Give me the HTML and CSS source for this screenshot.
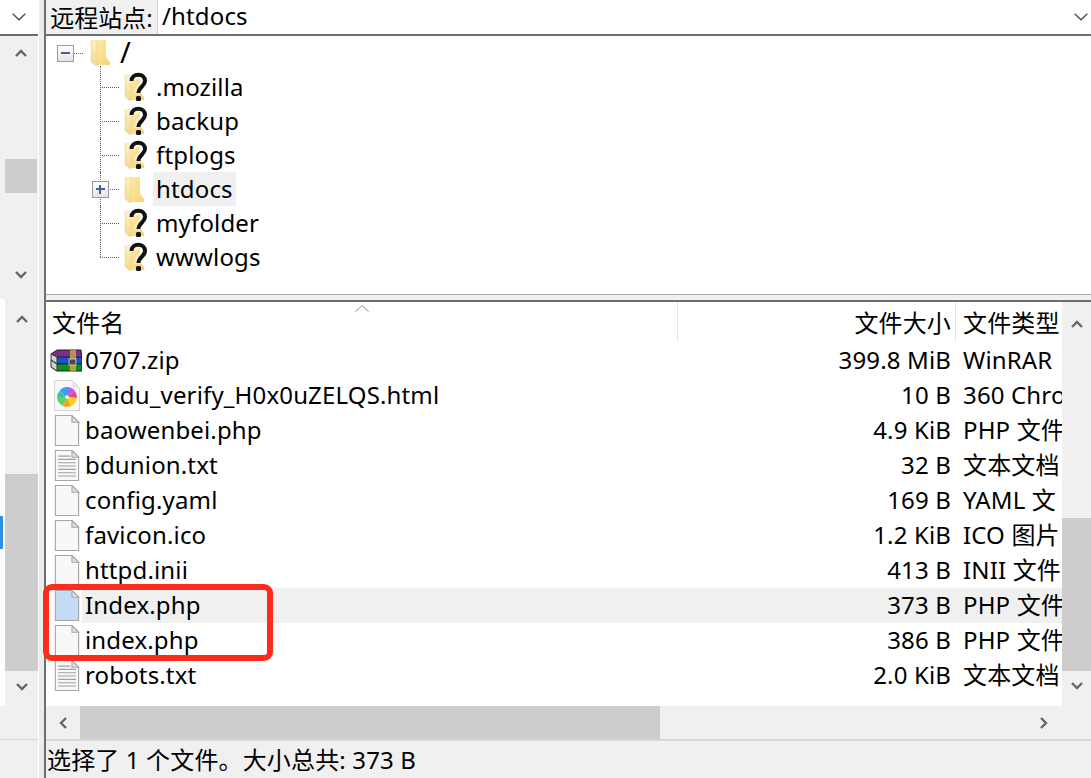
FILE: index.html
```html
<!DOCTYPE html>
<html lang="zh-CN">
<head>
<meta charset="utf-8">
<title>FileZilla</title>
<link rel="stylesheet" href="styles.css">
</head>
<body>
<svg class="defs" width="0" height="0" aria-hidden="true">
  <defs>
    <linearGradient id="fold" x1="0" y1="0" x2="1" y2="1">
      <stop offset="0" stop-color="#fdeaa8"/><stop offset="1" stop-color="#f6d36f"/>
    </linearGradient>
    <linearGradient id="foldb" x1="0" y1="0" x2="0" y2="1">
      <stop offset="0" stop-color="#fff0bd"/><stop offset="1" stop-color="#f3d98f"/>
    </linearGradient>
    <filter id="glow" x="-30%" y="-30%" width="160%" height="160%"><feGaussianBlur stdDeviation="0.9"/></filter>
    <symbol id="folder" viewBox="0 0 20 28">
      <path d="M6 1h10v17l4 5v3H6z" fill="url(#fold)"/>
      <path d="M1 2l6-1v26l-3-1.500-3-3z" fill="url(#foldb)" stroke="#e8cf8c" stroke-width=".5"/>
    </symbol>
    <symbol id="unknown" viewBox="0 0 24 30">
      <use href="#folder" x="0" y="2" width="20" height="28"/>
      <path d="M7.500 9c0-8.500 13.500-8.500 13.500 0 0 5.500-6.500 5.500-6.500 12" fill="none" stroke="#fff" stroke-width="6.500" filter="url(#glow)"/>
      <path d="M7.500 9c0-8.500 13.500-8.500 13.500 0 0 5.500-6.500 5.500-6.500 12" fill="none" stroke="#111" stroke-width="4"/>
      <rect x="12" y="24" width="5" height="5" rx="1.500" fill="#111"/>
    </symbol>
    <symbol id="doc" viewBox="0 0 22 28">
      <path d="M.5.500h15l6 6v21H.5z" fill="#f8f8f8" stroke="#a6a6a6"/>
      <path d="M15.500.500v6h6z" fill="#dfe3e8" stroke="#a6a6a6"/>
    </symbol>
    <symbol id="docsel" viewBox="0 0 22 28">
      <path d="M.5.500h15l6 6v21H.5z" fill="#c5dcf6" stroke="#a6a6a6"/>
      <path d="M15.500.500v6h6z" fill="#dfe6ef" stroke="#a6a6a6"/>
    </symbol>
    <symbol id="txt" viewBox="0 0 22 28">
      <path d="M.5.500h15l6 6v21H.5z" fill="#f8f8f8" stroke="#a6a6a6"/>
      <path d="M15.500.500v6h6z" fill="#dfe3e8" stroke="#a6a6a6"/>
      <path d="M3 5.500h11M3 8.500h16M3 11.500h16M3 14.500h16M3 17.500h16M3 20.500h16M3 23.500h16" stroke="#a0a0a0"/>
    </symbol>
    <symbol id="rar" viewBox="0 0 32 24">
      <path d="M1 5l6-4h24l1 8H7z" fill="#7c2f86" stroke="#2b1530"/>
      <path d="M1 11l6-3h25v7H7z" fill="#1f4fc4" stroke="#13204d"/>
      <path d="M1 18l6-3h25v7H7z" fill="#0d8f22" stroke="#0b3312"/>
      <path d="M1 5l6 3v7l-6-4zM1 11l6 4v7l-6-4z" fill="#cfd3d6" stroke="#333"/>
      <path d="M20 1h6v21h-6z" fill="#c9a24a" fill-opacity=".85"/>
      <rect x="19" y="10" width="7" height="6" fill="#5a4a2a" stroke="#eee" stroke-width=".7"/>
    </symbol>
    <symbol id="browser" viewBox="0 0 26 31">
      <path d="M.5.500h18l7 7v23H.5z" fill="#f7f7f7" stroke="#d4d4d4"/>
      <path d="M18.500.500v7h7z" fill="#e4e4e4"/>
      <path d="M13 17L5.500 11A10 10 0 0 1 13 7z" fill="#3aa0f0"/>
      <path d="M13 17V7a10 10 0 0 1 8 4z" fill="#b05ff0"/>
      <path d="M13 17l8-6a10 10 0 0 1 2 7z" fill="#f0418c"/>
      <path d="M13 17l10 1a10 10 0 0 1-6 8z" fill="#f9d423"/>
      <path d="M13 17l4 9a10 10 0 0 1-8 0z" fill="#f9a01e"/>
      <path d="M13 17l-4 9a10 10 0 0 1-6-9z" fill="#5fd35f"/>
      <path d="M13 17H3a10 10 0 0 1 2.500-6z" fill="#35c3a8"/>
      <circle cx="13" cy="17" r="1.800" fill="#fff"/>
    </symbol>
    <symbol id="up" viewBox="0 0 12 8"><path d="M1 7l5-5 5 5" fill="none" stroke="#666" stroke-width="2.400"/></symbol>
    <symbol id="down" viewBox="0 0 12 8"><path d="M1 1l5 5 5-5" fill="none" stroke="#666" stroke-width="2.400"/></symbol>
    <symbol id="left" viewBox="0 0 8 12"><path d="M7 1L2 6l5 5" fill="none" stroke="#666" stroke-width="2.400"/></symbol>
    <symbol id="right" viewBox="0 0 8 12"><path d="M1 1l5 5-5 5" fill="none" stroke="#666" stroke-width="2.400"/></symbol>
    <symbol id="combo" viewBox="0 0 14 8"><path d="M.7.700L7 6.800 13.300.700" fill="none" stroke="#444" stroke-width="1.200"/></symbol>
  </defs>
</svg>

<div class="app">
  <div class="corner"><svg class="combo-arrow"><use href="#combo"/></svg></div>
  <div class="split split-top"></div>
  <div class="pathbar">
    <span class="path-label">远程站点:</span>
    <span class="path-value">/htdocs</span>
    <svg class="combo-arrow"><use href="#combo"/></svg>
  </div>

  <div class="vscroll side-upper">
    <svg class="arrow"><use href="#up"/></svg>
    <div class="track"><div class="thumb thumb-a"></div></div>
    <svg class="arrow"><use href="#down"/></svg>
  </div>
  <div class="split"></div>
  <div class="tree">
    <div class="tree-root">
      <span class="exp"><span class="exp-h"></span></span>
      <span class="dots-root"></span>
      <svg class="ico-root"><use href="#folder"/></svg>
      <span class="root-label">/</span>
    </div>
    <div class="tree-child"><span class="conn"></span><svg class="ico-node"><use href="#unknown"/></svg><span class="node-label">.mozilla</span></div>
    <div class="tree-child"><span class="conn"></span><svg class="ico-node"><use href="#unknown"/></svg><span class="node-label">backup</span></div>
    <div class="tree-child"><span class="conn"></span><svg class="ico-node"><use href="#unknown"/></svg><span class="node-label">ftplogs</span></div>
    <div class="tree-child"><span class="exp exp-over"><span class="exp-h"></span><span class="exp-v"></span></span><span class="conn"></span><svg class="ico-node"><use href="#folder" width="20" height="28" y="2"/></svg><span class="node-label is-current">htdocs</span></div>
    <div class="tree-child"><span class="conn"></span><svg class="ico-node"><use href="#unknown"/></svg><span class="node-label">myfolder</span></div>
    <div class="tree-child"><span class="conn"></span><svg class="ico-node"><use href="#unknown"/></svg><span class="node-label">wwwlogs</span></div>
  </div>

  <div class="gap-left"></div>
  <div class="split"></div>
  <div class="gap-main"></div>

  <div class="side-lower">
    <div class="sliver"><span class="sliver-mark"></span></div>
    <div class="vscroll">
      <svg class="arrow"><use href="#up"/></svg>
      <div class="track"><div class="thumb thumb-b"></div></div>
      <svg class="arrow"><use href="#down"/></svg>
    </div>
  </div>
  <div class="split"></div>
  <div class="list-wrap">
    <div class="list">
      <div class="row head">
        <div class="name-head">文件名<svg class="sort" viewBox="0 0 14 7"><path d="M.5 6.500L7 .7l6.500 5.800" fill="none" stroke="#8a8a8a"/></svg></div>
        <div class="size">文件大小</div>
        <div class="type">文件类型</div>
      </div>
      <div class="row"><div class="name"><svg class="ico-rar"><use href="#rar"/></svg><span class="fname">0707.zip</span></div><div class="size">399.8 MiB</div><div class="type">WinRAR</div></div>
      <div class="row"><div class="name"><svg class="ico-file"><use href="#browser"/></svg><span class="fname">baidu_verify_H0x0uZELQS.html</span></div><div class="size">10 B</div><div class="type">360 Chrome</div></div>
      <div class="row"><div class="name"><svg class="ico-file"><use href="#doc"/></svg><span class="fname">baowenbei.php</span></div><div class="size">4.9 KiB</div><div class="type">PHP 文件</div></div>
      <div class="row"><div class="name"><svg class="ico-file"><use href="#txt"/></svg><span class="fname">bdunion.txt</span></div><div class="size">32 B</div><div class="type">文本文档</div></div>
      <div class="row"><div class="name"><svg class="ico-file"><use href="#doc"/></svg><span class="fname">config.yaml</span></div><div class="size">169 B</div><div class="type">YAML 文</div></div>
      <div class="row"><div class="name"><svg class="ico-file"><use href="#doc"/></svg><span class="fname">favicon.ico</span></div><div class="size">1.2 KiB</div><div class="type">ICO 图片</div></div>
      <div class="row"><div class="name"><svg class="ico-file"><use href="#doc"/></svg><span class="fname">httpd.inii</span></div><div class="size">413 B</div><div class="type">INII 文件</div></div>
      <div class="row selected"><div class="name"><svg class="ico-file"><use href="#docsel"/></svg><span class="fname">Index.php</span></div><div class="size">373 B</div><div class="type">PHP 文件</div></div>
      <div class="row"><div class="name"><svg class="ico-file"><use href="#doc"/></svg><span class="fname">index.php</span></div><div class="size">386 B</div><div class="type">PHP 文件</div></div>
      <div class="row"><div class="name"><svg class="ico-file"><use href="#txt"/></svg><span class="fname">robots.txt</span></div><div class="size">2.0 KiB</div><div class="type">文本文档</div></div>
    </div>
    <div class="vscroll list-scroll">
      <svg class="arrow"><use href="#up"/></svg>
      <div class="track"><div class="thumb thumb-c"></div></div>
      <svg class="arrow"><use href="#down"/></svg>
    </div>
    <div class="callout"></div>
  </div>

  <div class="bottom-left"></div>
  <div class="split"></div>
  <div class="hscroll">
    <svg class="harrow"><use href="#left"/></svg>
    <div class="htrack"><div class="hthumb"></div></div>
    <svg class="harrow"><use href="#right"/></svg>
  </div>

  <div class="bottom-left status-left"></div>
  <div class="split"></div>
  <div class="status">选择了 1 个文件。大小总共: 373 B</div>
</div>
</body>
</html>
```
FILE: styles.css
```css
* { box-sizing: border-box; }
html, body { margin: 0; height: 100%; }
body {
  background: #f0f0f0;
  color: #000;
  font-family: "Noto Sans", "Noto Sans CJK SC", sans-serif;
  font-size: 24px;
  letter-spacing: .15px;
  overflow: hidden;
}
.defs { position: absolute; }
svg { display: block; flex: none; }

.app {
  display: grid;
  grid-template-columns: 38px 8px 1fr;
  grid-template-rows: 36px 259px 7px 404px 33px 39px;
  width: 1091px;
  height: 778px;
}

.corner {
  background: #fff;
  border-bottom: 2px solid #6e6e6e;
  display: flex;
  align-items: center;
  justify-content: center;
}
.combo-arrow { width: 14px; height: 8px; }

.split {
  border-left: 1px solid #fff;
  border-right: 2px solid #6e6e6e;
  background: #ececec;
}

.pathbar {
  display: flex;
  align-items: center;
  background: #fff;
  border-bottom: 2px solid #6e6e6e;
  padding-right: 3px;
}
.path-label {
  background: #f0f0f0;
  align-self: stretch;
  width: 112px;
  display: flex;
  align-items: center;
  justify-content: center;
  border-right: 1px solid #d0d0d0;
  white-space: nowrap;
  padding-bottom: 2px;
  letter-spacing: 0;
}
.path-value { flex: 1; padding: 0 0 2px 4px; line-height: 1; }

.vscroll {
  display: flex;
  flex-direction: column;
  align-items: center;
  background: #f0f0f0;
}
.side-upper { margin-left: 5px; width: 32px; padding: 9px 0 12px; }
.arrow { width: 12px; height: 8px; margin: 4px 0; }
.track { flex: 1; align-self: stretch; }
.thumb { background: #cdcdcd; }
.thumb-a { margin-top: 98px; height: 34px; }

.tree { background: #fff; border-bottom: 1px solid #a8a8a8; }
.tree-root, .tree-child { display: flex; align-items: center; height: 34px; }
.tree-root { padding-left: 11px; }
.exp {
  width: 17px;
  height: 17px;
  border: 1px solid #9a9a9a;
  background: linear-gradient(#fff, #e4e4e4);
  position: relative;
  flex: none;
}
.exp-h { position: absolute; left: 3px; right: 3px; top: 6px; height: 2px; background: #3f5fa8; }
.exp-v { position: absolute; top: 3px; bottom: 3px; left: 6px; width: 2px; background: #3f5fa8; }
.dots-root { width: 9px; border-top: 1px dotted #666; }
.ico-root { width: 20px; height: 28px; margin-left: 7px; }
.root-label { margin-left: 10px; font-size: 29px; line-height: 34px; padding-bottom: 2px; }

.tree-child { margin-left: 54px; position: relative; }
.tree-child::before {
  content: "";
  position: absolute;
  left: 0;
  top: 0;
  bottom: 0;
  border-left: 1px dotted #666;
}
.tree-child:last-child::before { bottom: 50%; }
.tree-root + .tree-child::before { top: -4px; }
.conn { width: 19px; border-top: 1px dotted #666; flex: none; }
.ico-node { width: 24px; height: 30px; margin-left: 5px; }
.node-label { margin-left: 5px; padding: 0 3px; height: 34px; line-height: 33px; }
.is-current { background: #f0f0f0; }
.exp-over { position: absolute; left: -8px; top: 9px; z-index: 1; }

.gap-left { background: #f0f0f0; }
.gap-main { background: #f0f0f0; border-bottom: 2px solid #6e6e6e; }

.side-lower { display: flex; margin-top: -3px; height: 407px; background: #fff; position: relative; z-index: 1; }
.sliver { width: 5px; position: relative; }
.sliver-mark { position: absolute; left: 0; top: 217px; width: 3px; height: 33px; background: #2f8fe8; }
.side-lower .vscroll { flex: 1; padding: 12px 0 11px; }
.thumb-b { margin-top: 147px; height: 197px; }

.list-wrap { position: relative; display: flex; min-width: 0; background: #fff; }
.list { flex: 1; min-width: 0; overflow: hidden; }
.row {
  display: grid;
  grid-template-columns: 631px 279px 106px;
  height: 35px;
  line-height: 34px;
  white-space: nowrap;
}
.head { height: 40px; line-height: 42px; margin-bottom: 1px; }
.head > div { height: 40px; }
.name-head { padding-left: 6px; position: relative; }
.sort { position: absolute; left: 309px; top: 3px; width: 14px; height: 7px; }
.head .size { border-left: 1px solid #e4e4e4; border-right: 1px solid #e4e4e4; padding-right: 4px; }
.name { display: flex; align-items: center; }
.fname { flex: 1; padding-left: 3px; height: 35px; }
.ico-rar { width: 32px; height: 24px; margin-left: 4px; }
.ico-file { width: 26px; height: 31px; margin-left: 8px; margin-right: 2px; }
.size { text-align: right; padding-right: 5px; }
.type { padding-left: 7px; overflow: hidden; }
.selected .fname, .selected .size, .selected .type { background: #f0f0f0; }

.list-scroll { width: 29px; padding: 14px 0 12px; flex: none; }
.thumb-c { margin-top: 186px; height: 153px; }

.callout {
  position: absolute;
  left: -3px;
  top: 282px;
  width: 230px;
  height: 77px;
  border: 6px solid #fd2c1a;
  border-radius: 9px;
  pointer-events: none;
}

.bottom-left { background: #f0f0f0; }
.status-left { border-top: 1px solid #d8d8d8; }

.hscroll { display: flex; align-items: center; background: #f0f0f0; padding: 0 30px 0 0; }
.harrow { width: 8px; height: 12px; margin: 0 13px; }
.htrack { flex: 1; align-self: stretch; }
.hthumb { width: 580px; height: 100%; background: #cdcdcd; }

.status {
  border-top: 2px solid #d8d8d8;
  padding-left: 1px;
  line-height: 38px;
  white-space: nowrap;
  background: #f0f0f0;
}
```
